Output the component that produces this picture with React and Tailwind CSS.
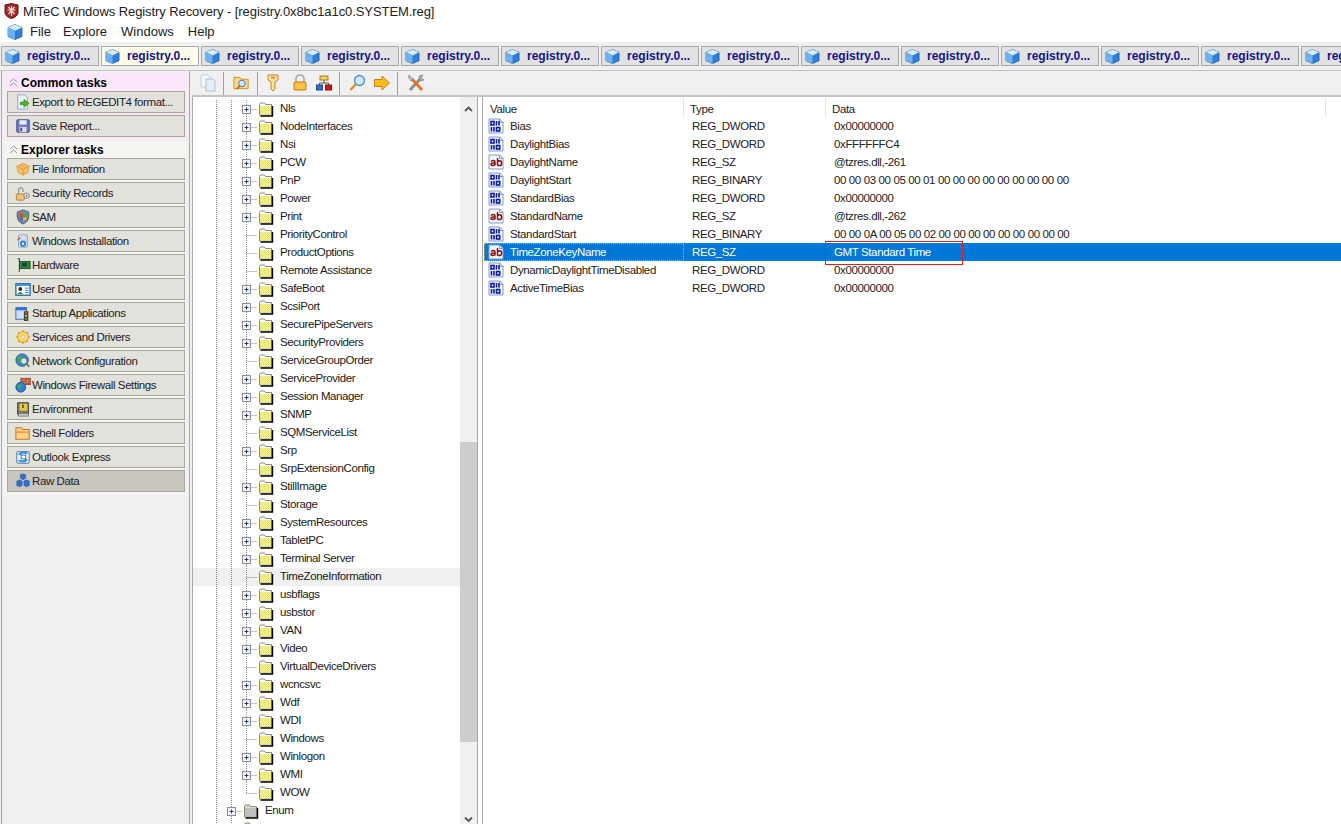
import React from "react";

const font = "font-['Liberation_Sans',sans-serif]";

const Cube = ({ size = 16 }) => (
  <svg width={size} height={size} viewBox="0 0 16 16" className="shrink-0">
    <path d="M8 0.5 L15 3.5 V12.5 L8 15.5 L1 12.5 V3.5 Z" fill="#2f7fd8" stroke="#1c4f96" strokeWidth="0.7" />
    <path d="M8 0.5 L15 3.5 L8 6.8 L1 3.5 Z" fill="#d8ecfc" />
    <path d="M1 3.5 L8 6.8 V15.5 L1 12.5 Z" fill="#6db2ee" />
  </svg>
);

const Folder = ({ grey }) => (
  <svg width="16" height="15" viewBox="0 0 16 15" className="shrink-0">
    <defs>
      <pattern id="dither" width="2" height="2" patternUnits="userSpaceOnUse">
        <rect width="2" height="2" fill="#ffff66" />
        <rect width="1" height="1" fill="#d8d8a0" />
        <rect x="1" y="1" width="1" height="1" fill="#d8d8a0" />
      </pattern>
    </defs>
    <path d="M1.5 2.5 L2.5 1 H6.5 L7.5 2.5 H13.5 V13 H1.5 Z" fill={grey ? "#d8d8d8" : "#fff"} stroke="#8a8a70" />
    <rect x="2" y="4" width="11" height="8.5" fill={grey ? "#c0c0c0" : "url(#dither)"} />
    <path d="M14.5 4 V14 H2.5" fill="none" stroke="#000" strokeWidth="1.4" />
  </svg>
);

const RegIcon = ({ kind }) => (
  <svg width="16" height="16" viewBox="0 0 16 16" className="shrink-0">
    <path d="M1 1 H11.5 L15 4.5 V15 H1 Z" fill="#f4f7fc" stroke="#7f9cc8" />
    <path d="M11.5 1 V4.5 H15 Z" fill="#fff" stroke="#7f9cc8" />
    {kind === "bin" ? (
      <g fill="none" stroke="#0c1c9c" strokeWidth="1.6">
        <rect x="3" y="3.5" width="3" height="3.5" />
        <path d="M8.5 3 V7.5 M11 3 V7.5" />
        <path d="M3.5 9 V13.5 M6 9 V13.5" />
        <rect x="8.5" y="9.5" width="3.2" height="3.5" />
      </g>
    ) : (
      <g fill="none" stroke="#8a1010" strokeWidth="1.5">
        <path d="M3 7.5 Q4 6.5 5.5 6.5 Q7 6.5 7 8 V11.5 M7 9 H5 Q3 9 3 10.3 Q3 11.5 4.5 11.5 Q6 11.5 7 10.5" />
        <path d="M9.5 4 V11.5 M9.5 8 Q10.5 6.8 11.8 6.8 Q13.6 6.8 13.6 9.2 Q13.6 11.6 11.8 11.6 Q10.5 11.6 9.5 10.8" />
      </g>
    )}
  </svg>
);

const TreeGuide = ({ level, expand, last }) => {
  // x values are measured from the left of the tree panel
  const cx = level === 3 ? 53 : 38;
  return (
    <svg width="72" height="18" viewBox="0 0 72 18" className="shrink-0">
      <g stroke="#8c8c8c" strokeDasharray="1 1" fill="none">
        <path d="M23.5 0 V18" />
        {level === 3 && <path d="M38.5 0 V18" />}
        <path d={last ? `M${cx + 0.5} 0 V9.5` : `M${cx + 0.5} 0 V18`} />
        <path d={`M${cx + 0.5} 9.5 H${cx + 11}`} />
      </g>
      {expand && (
        <g>
          <rect x={cx - 3.5} y="5.5" width="8" height="8" fill="#f2f2f2" stroke="#8e8e8e" />
          <path d={`M${cx - 1.5} 9.5 H${cx + 2.5} M${cx + 0.5} 7.5 V11.5`} stroke="#1f3a8a" />
        </g>
      )}
    </svg>
  );
};

const treeRows = [
  ["Nls", 1], ["NodeInterfaces", 1], ["Nsi", 1], ["PCW", 1], ["PnP", 1], ["Power", 1], ["Print", 1],
  ["PriorityControl", 0], ["ProductOptions", 0], ["Remote Assistance", 0], ["SafeBoot", 1], ["ScsiPort", 1],
  ["SecurePipeServers", 1], ["SecurityProviders", 1], ["ServiceGroupOrder", 0], ["ServiceProvider", 1],
  ["Session Manager", 1], ["SNMP", 1], ["SQMServiceList", 0], ["Srp", 1], ["SrpExtensionConfig", 0],
  ["StillImage", 1], ["Storage", 0], ["SystemResources", 1], ["TabletPC", 1], ["Terminal Server", 1],
  ["TimeZoneInformation", 0], ["usbflags", 1], ["usbstor", 1], ["VAN", 1], ["Video", 1],
  ["VirtualDeviceDrivers", 0], ["wcncsvc", 1], ["Wdf", 1], ["WDI", 1], ["Windows", 0], ["Winlogon", 1],
  ["WMI", 1], ["WOW", 0],
];

const regRows = [
  ["Bias", "REG_DWORD", "0x00000000", "bin"],
  ["DaylightBias", "REG_DWORD", "0xFFFFFFC4", "bin"],
  ["DaylightName", "REG_SZ", "@tzres.dll,-261", "str"],
  ["DaylightStart", "REG_BINARY", "00 00 03 00 05 00 01 00 00 00 00 00 00 00 00 00", "bin"],
  ["StandardBias", "REG_DWORD", "0x00000000", "bin"],
  ["StandardName", "REG_SZ", "@tzres.dll,-262", "str"],
  ["StandardStart", "REG_BINARY", "00 00 0A 00 05 00 02 00 00 00 00 00 00 00 00 00", "bin"],
  ["TimeZoneKeyName", "REG_SZ", "GMT Standard Time", "str", true],
  ["DynamicDaylightTimeDisabled", "REG_DWORD", "0x00000000", "bin"],
  ["ActiveTimeBias", "REG_DWORD", "0x00000000", "bin"],
];

const Svg = ({ children, w = 16, h = 16 }) => (
  <svg width={w} height={h} viewBox="0 0 18 18" className="shrink-0">{children}</svg>
);

const taskIcons = {
  export: (
    <Svg><path d="M3 1 H11 L14 4 V17 H3 Z" fill="#eaf3fd" stroke="#7fa6d4" /><path d="M6 9 H10 V6 L16 10.5 L10 15 V12 H6 Z" fill="#4caf2e" stroke="#2c7a17" strokeWidth="0.6" /></Svg>
  ),
  save: (
    <Svg><rect x="2" y="2" width="14" height="14" rx="1" fill="#6f78c0" stroke="#3c4485" /><rect x="5" y="2.5" width="8" height="5" fill="#e8ebf8" /><rect x="5" y="10" width="8" height="6" fill="#d5d8ea" /><rect x="6" y="11" width="2" height="4" fill="#3c4485" /></Svg>
  ),
  file: (
    <Svg><path d="M2 6 L9 2.5 L16 6 L14.5 13 L9 16 L3.5 13 Z" fill="#f6be6d" stroke="#e09a3c" /><path d="M2 6 L9 9.5 L16 6 M9 9.5 V16 M5.5 4 L12.5 8" fill="none" stroke="#e09a3c" /></Svg>
  ),
  security: (
    <Svg><rect x="1.5" y="10" width="9" height="7" rx="1" fill="#f2c27c" stroke="#b07b2c" /><path d="M4 10 V6 Q4 3 6.5 3 Q9 3 9 6 V8" fill="none" stroke="#888" strokeWidth="1.2" /><circle cx="13" cy="12" r="3" fill="#e6e6e6" stroke="#777" /><circle cx="13" cy="12" r="1" fill="#777" /></Svg>
  ),
  sam: (
    <Svg><path d="M9 1 L15.5 3.5 V9 Q15.5 14 9 17 Q2.5 14 2.5 9 V3.5 Z" fill="#7a8aa0" stroke="#4c5a70" /><path d="M5 5 H8.7 V9 H5 Z" fill="#e8402a" /><path d="M9.3 5 H13 V9 H9.3 Z" fill="#4aa82e" /><path d="M5 9.6 H8.7 V13.5 Q6 12.5 5 10.5 Z" fill="#2f6fd8" /><path d="M9.3 9.6 H13 V10.5 Q12 12.5 9.3 13.5 Z" fill="#f5c518" /></Svg>
  ),
  install: (
    <Svg><rect x="4" y="2" width="10" height="14" rx="1" fill="#c7d9ee" stroke="#8ca0bc" /><path d="M6 2 V16 M10 2 V16" stroke="#e8f0f8" /><circle cx="9" cy="12" r="3.5" fill="#2f7fd8" /><circle cx="9" cy="12" r="1.4" fill="#fff" /><path d="M3 8 L6 5" stroke="#e8402a" strokeWidth="1.5" /></Svg>
  ),
  hardware: (
    <Svg><path d="M3 2 H5 V16 H4" fill="none" stroke="#555" strokeWidth="1.4" /><rect x="5" y="5" width="12" height="8" fill="#1f8a3a" stroke="#0e5a22" /><rect x="8" y="6.5" width="5" height="4" fill="#333" /></Svg>
  ),
  user: (
    <Svg><rect x="1" y="3" width="16" height="13" fill="#fff" stroke="#1f5fa8" strokeWidth="1.4" /><rect x="1" y="3" width="16" height="2.5" fill="#2f8fd8" /><circle cx="6" cy="9" r="2.2" fill="#3a2a18" /><path d="M2.5 15 Q6 10 9.5 15 Z" fill="#2f9a3a" /><path d="M11 8 H15.5 M11 10.5 H15.5 M11 13 H15.5" stroke="#2f6fd8" /></Svg>
  ),
  startup: (
    <Svg><rect x="1" y="3" width="12" height="13" fill="#cfe0f6" stroke="#3a5ea8" /><rect x="1" y="3" width="12" height="3" fill="#3a6fd0" /><rect x="10" y="7" width="5" height="11" fill="#444" /><circle cx="12.5" cy="9" r="1.2" fill="#e8402a" /><circle cx="12.5" cy="12.2" r="1.2" fill="#f5c518" /><circle cx="12.5" cy="15.5" r="1.2" fill="#4aa82e" /></Svg>
  ),
  services: (
    <Svg><circle cx="9" cy="9" r="6" fill="#fbe08a" stroke="#d9a020" strokeWidth="1.2" /><circle cx="9" cy="9" r="2.4" fill="#fff" stroke="#d9a020" /><path d="M9 1 V4 M9 14 V17 M1 9 H4 M14 9 H17 M3.5 3.5 L5.5 5.5 M12.5 12.5 L14.5 14.5 M14.5 3.5 L12.5 5.5 M5.5 12.5 L3.5 14.5" stroke="#e8a820" strokeWidth="1.8" /></Svg>
  ),
  network: (
    <Svg><circle cx="8" cy="8" r="7" fill="#2f8fc8" stroke="#1c5a88" /><path d="M3 5 Q7 3 9 6 Q7 10 4 10 Z" fill="#4caf2e" /><path d="M10 11 Q13 9 14 11 L11 14 Z" fill="#4caf2e" /><circle cx="10" cy="9" r="3.5" fill="#cfe6fb" stroke="#777" /><path d="M12.5 11.5 L16 15.5" stroke="#666" strokeWidth="1.8" /></Svg>
  ),
  firewall: (
    <Svg><rect x="6" y="1" width="12" height="8" fill="#a8503a" /><path d="M6 3.5 H18 M6 6 H18 M10 1 V3.5 M14 3.5 V6 M10 6 V9" stroke="#e0b0a0" strokeWidth="0.6" /><circle cx="6.5" cy="11.5" r="5.5" fill="#2f7fd8" stroke="#1c4f96" /><path d="M3 9 Q6 8 8 10 Q6 13 4 13 Z" fill="#4caf2e" /></Svg>
  ),
  env: (
    <Svg><rect x="3" y="2" width="12" height="13" fill="#777" stroke="#333" /><rect x="5" y="3" width="9" height="8" fill="#e9c53a" /><rect x="4" y="14" width="11" height="3" fill="#ccc" stroke="#777" /><path d="M9 4 V8" stroke="#444" strokeWidth="1.6" /></Svg>
  ),
  shell: (
    <Svg><path d="M1 3 H7 L9 5 H16 V16 H1 Z" fill="#f8d488" stroke="#d9701c" strokeWidth="1.2" /><path d="M1 8 H16" stroke="#d9701c" /></Svg>
  ),
  outlook: (
    <Svg><rect x="2" y="3" width="14" height="13" rx="1" fill="#e8eef8" stroke="#3a6fb0" /><path d="M3 6 Q9 0 15 5 L12 6 Q9 4 6 7 Z" fill="#2f8fd8" /><path d="M15 12 Q9 18 3 13 L6 12 Q9 14 12 11 Z" fill="#2f8fd8" /><rect x="7" y="7" width="5" height="4" fill="#fff" stroke="#3a6fb0" /></Svg>
  ),
  raw: (
    <Svg><path d="M6 2 L9 1 L12 2 V6 L9 7.5 L6 6 Z" fill="#2f6fd8" stroke="#16408c" strokeWidth="0.5" /><path d="M2 9 L5 8 L8 9 V14 L5 15.5 L2 14 Z" fill="#2f6fd8" stroke="#16408c" strokeWidth="0.5" /><path d="M10 9 L13 8 L16 9 V14 L13 15.5 L10 14 Z" fill="#2f6fd8" stroke="#16408c" strokeWidth="0.5" /></Svg>
  ),
};

const commonTasks = [
  ["export", "Export to REGEDIT4 format..."],
  ["save", "Save Report..."],
];

const explorerTasks = [
  ["file", "File Information"],
  ["security", "Security Records"],
  ["sam", "SAM"],
  ["install", "Windows Installation"],
  ["hardware", "Hardware"],
  ["user", "User Data"],
  ["startup", "Startup Applications"],
  ["services", "Services and Drivers"],
  ["network", "Network Configuration"],
  ["firewall", "Windows Firewall Settings"],
  ["env", "Environment"],
  ["shell", "Shell Folders"],
  ["outlook", "Outlook Express"],
  ["raw", "Raw Data"],
];

const TaskButton = ({ icon, label, active }) => (
  <div className={`flex h-[22px] items-center gap-[1px] border border-[#a8a898] pl-[7px] text-[11.5px] tracking-[-0.4px] text-[#222] ${active ? "bg-[#c8c6be]" : "bg-[#e2e1dc]"}`}>
    {taskIcons[icon]}
    <span className="whitespace-nowrap pt-[1px]">{label}</span>
  </div>
);

const Collapse = () => (
  <svg width="9" height="10" viewBox="0 0 9 10" className="shrink-0">
    <path d="M1 4 L4.5 1 L8 4 M1 8 L4.5 5 L8 8" fill="none" stroke="#9a9a9a" />
  </svg>
);

const Section = ({ title, tasks, className, head }) => (
  <div className={`flex flex-col gap-[2px] rounded-[3px] px-[2px] pb-[2px] ${className}`}>
    <div className={`flex items-center gap-[3px] pl-[2px] text-[12px] font-bold text-black ${head}`}>
      <Collapse />
      {title}
    </div>
    {tasks.map(([icon, label]) => (
      <TaskButton key={label} icon={icon} label={label} active={label === "Raw Data"} />
    ))}
  </div>
);

const Sep = () => <div className="mx-[7px] h-[23px] w-px bg-[#a0a0a0]" />;

const Toolbar = () => (
  <div className="flex h-[26px] items-center border-b-2 border-[#c4c4c4] pl-[8px]">
    <svg width="16" height="18" viewBox="0 0 16 18" className="shrink-0">
      <path d="M1 1 H8 L10 3 V13 H1 Z" fill="#f4f7fb" stroke="#c2cfe0" />
      <path d="M6 5 H13 L15 7 V17 H6 Z" fill="#e4edf8" stroke="#a9c1de" />
    </svg>
    <Sep />
    <svg width="17" height="18" viewBox="0 0 18 18" className="ml-[2px] shrink-0">
      <path d="M1 3 H7 L8.5 5 H16 V15 H1 Z" fill="#fbd98a" stroke="#d68a1c" />
      <circle cx="9.5" cy="9.5" r="3.5" fill="#cfe6fb" stroke="#3a6fa8" />
      <path d="M7 12 L4 15.5" stroke="#c96a10" strokeWidth="2" />
    </svg>
    <Sep />
    <svg width="14" height="18" viewBox="0 0 14 18" className="ml-[1px] shrink-0">
      <path d="M2 1 H12 V6 L9 8 V15 L7 17 L5 15 V8 L2 6 Z" fill="#fbe3a6" stroke="#c9801c" />
      <rect x="5" y="2.8" width="4" height="1.6" fill="#c9801c" />
    </svg>
    <svg width="16" height="18" viewBox="0 0 16 18" className="ml-[12px] shrink-0">
      <path d="M4 8 V5 Q4 1 8 1 Q12 1 12 5 V8" fill="none" stroke="#a8a8a8" strokeWidth="1.6" />
      <rect x="2" y="8" width="12" height="8" rx="1" fill="#f8c440" stroke="#c9701c" />
    </svg>
    <svg width="16" height="16" viewBox="0 0 16 16" className="ml-[8px] shrink-0">
      <rect x="4" y="1" width="8" height="4" fill="#f8d060" stroke="#a87a1c" />
      <path d="M8 5 V8 M3.5 8 H12.5 M3.5 8 V10 M12.5 8 V10" stroke="#555" fill="none" />
      <rect x="0.5" y="10" width="6" height="5" fill="#2f6fc8" stroke="#1c4a8c" />
      <rect x="9.5" y="10" width="6" height="5" fill="#d01818" stroke="#8c1010" />
    </svg>
    <Sep />
    <svg width="17" height="18" viewBox="0 0 17 18" className="ml-[2px] shrink-0">
      <circle cx="10.5" cy="6.5" r="5" fill="#cfe6fb" stroke="#4f8cc8" strokeWidth="1.3" />
      <path d="M6.5 10.5 L1.5 16" stroke="#e08a1c" strokeWidth="2.4" />
    </svg>
    <svg width="16" height="16" viewBox="0 0 16 16" className="ml-[8px] shrink-0">
      <path d="M0.5 4.5 H8 V1 L15.5 8 L8 15 V11.5 H0.5 Z" fill="#fbbc1c" stroke="#c9801c" />
    </svg>
    <Sep />
    <svg width="18" height="18" viewBox="0 0 18 18" className="ml-[2px] shrink-0">
      <path d="M3 16 L14 4" stroke="#8a8a8a" strokeWidth="2.6" />
      <path d="M12 2 L16 1 L14 4 L17 6 L13 7 Z" fill="#b0b0b0" stroke="#666" strokeWidth="0.5" />
      <path d="M15 16 L5 5" stroke="#e8701c" strokeWidth="2.8" />
      <path d="M2 1 L6 5 L4 7 L1 3 Z" fill="#c0c0c0" stroke="#666" strokeWidth="0.5" />
    </svg>
  </div>
);

const Chevron = ({ down }) => (
  <svg width="9" height="7" viewBox="0 0 9 7">
    <path d={down ? "M1 1.5 L4.5 5 L8 1.5" : "M1 5 L4.5 1.5 L8 5"} fill="none" stroke="#555" strokeWidth="1.8" />
  </svg>
);

const Tree = () => (
  <div className="flex h-full w-[286px] border-l border-r border-[#a8a8a8]">
    <div className="flex h-full w-[268px] flex-col overflow-hidden pt-[3px]">
      {treeRows.map(([name, expand], i) => (
        <div key={name} className={`flex h-[18px] shrink-0 items-center ${name === "TimeZoneInformation" ? "bg-[#f0f0f0]" : ""}`}>
          <TreeGuide level={3} expand={!!expand} last={i === treeRows.length - 1} />
          <span className="-ml-[7px]"><Folder /></span>
          <span className="ml-[6px] whitespace-nowrap text-[11.5px] tracking-[-0.4px] text-[#1a1a1a]">{name}</span>
        </div>
      ))}
      <div className="flex h-[18px] shrink-0 items-center">
        <TreeGuide level={2} expand last={false} />
        <span className="-ml-[22px]"><Folder grey /></span>
        <span className="ml-[6px] text-[11.5px] tracking-[-0.4px] text-[#1a1a1a]">Enum</span>
      </div>
      <div className="flex h-[18px] shrink-0 items-center">
        <TreeGuide level={2} last={false} />
        <span className="-ml-[22px]"><Folder grey /></span>
      </div>
    </div>
    <div className="flex h-full w-[17px] flex-col items-center bg-[#f0f0f0]">
      <div className="flex h-[17px] shrink-0 items-center justify-center pt-[7px]"><Chevron /></div>
      <div className="mt-[328px] h-[300px] w-full shrink-0 bg-[#cdcdcd]" />
      <div className="mt-auto flex h-[17px] shrink-0 items-center justify-center pt-[8px]"><Chevron down /></div>
    </div>
  </div>
);

const RegList = () => (
  <div className="relative ml-[4px] flex h-full flex-1 flex-col border-l border-[#a8a8a8] bg-white pl-[1px] text-[11.5px] tracking-[-0.38px] text-[#222]">
    <div className="grid h-[20px] shrink-0 grid-cols-[200px_142px_500px_1fr] items-center">
      <div className="h-[19px] border-r border-[#e4e4e4] pl-[6px] leading-[22px]">Value</div>
      <div className="h-[19px] border-r border-[#e4e4e4] pl-[6px] leading-[22px]">Type</div>
      <div className="h-[19px] border-r border-[#e4e4e4] pl-[6px] leading-[22px]">Data</div>
    </div>
    {regRows.map(([name, type, data, kind, sel]) => (
      <div key={name} className={`grid h-[18px] shrink-0 grid-cols-[200px_142px_1fr] items-center ${sel ? "bg-[#0078d7] text-white" : ""}`}>
        <div className={`flex h-[18px] items-center gap-[6px] ${sel ? "border border-dotted border-[#f0a040] pl-[3px]" : "pl-[4px]"}`}>
          <RegIcon kind={kind} />
          <span className="whitespace-nowrap pt-[1px]">{name}</span>
        </div>
        <div className="pl-[8px] pt-[1px]">{type}</div>
        <div className="whitespace-nowrap pl-[8px] pt-[1px]">{data}</div>
      </div>
    ))}
    {/* red box drawn over the selected row */}
    <div className="absolute left-[342px] top-[144px] h-[24px] w-[138px] border border-[#e81c1c]" />
  </div>
);

export default function App() {
  return (
    <div className={`flex h-[824px] w-[1341px] flex-col overflow-hidden bg-[#f0f0f0] ${font}`}>
      <div className="flex h-[22px] shrink-0 items-center gap-[4px] bg-white pl-[4px] text-[13px] tracking-[-0.08px] text-[#222]">
        <svg width="15" height="16" viewBox="0 0 15 16" className="shrink-0">
          <path d="M1 2 L7.5 0.5 L14 2 V10 Q13 14 7.5 15.5 Q2 14 1 10 Z" fill="#9c2a2a" stroke="#5a1414" />
          <path d="M7.5 3 V13 M3.5 7 H11.5 M4.5 4 L10.5 11 M10.5 4 L4.5 11" stroke="#f0e0e0" strokeWidth="1.2" />
        </svg>
        <span className="whitespace-nowrap pt-[1px]">MiTeC Windows Registry Recovery - [registry.0x8bc1a1c0.SYSTEM.reg]</span>
      </div>
      <div className="flex h-[20px] shrink-0 items-center gap-[14px] bg-white pl-[7px] text-[13px] text-[#222]">
        <span className="-mr-[7px]"><Cube size={16} /></span>
        <span className="w-[19px]">File</span>
        <span>Explore</span>
        <span>Windows</span>
        <span>Help</span>
      </div>
      <div className="flex h-[29px] shrink-0 gap-[2px] overflow-hidden border-b border-[#c4c4c4] pl-[1px] pt-[4px]">
        {Array.from({ length: 14 }).map((_, i) => (
          <div key={i} className={`flex h-[20px] w-[98px] shrink-0 items-center gap-[7px] border border-[#a8a8a8] pl-[3px] text-[12px] font-bold text-[#14148c] ${i === 1 ? "bg-[#fbfbe8]" : "bg-[#e2e2e2]"}`}>
            <Cube size={15} />
            <span>registry.0...</span>
          </div>
        ))}
      </div>
      <div className="flex min-h-0 flex-1">
        <div className="ml-[1px] flex w-[189px] shrink-0 flex-col gap-[2px] border-x border-[#a8a8a8] pl-[3px] pr-[2px] pt-[2px]">
          <Section title="Common tasks" tasks={commonTasks} className="bg-[#fbe6fb]" head="h-[16px] pt-[4px]" />
          <Section title="Explorer tasks" tasks={explorerTasks} className="bg-[#f6f5f2]" head="h-[15px] pt-[3px]" />
        </div>
        <div className="ml-[2px] flex min-w-0 flex-1 flex-col">
          <Toolbar />
          <div className="flex min-h-0 flex-1 bg-white">
            <Tree />
            <RegList />
          </div>
        </div>
      </div>
    </div>
  );
}
